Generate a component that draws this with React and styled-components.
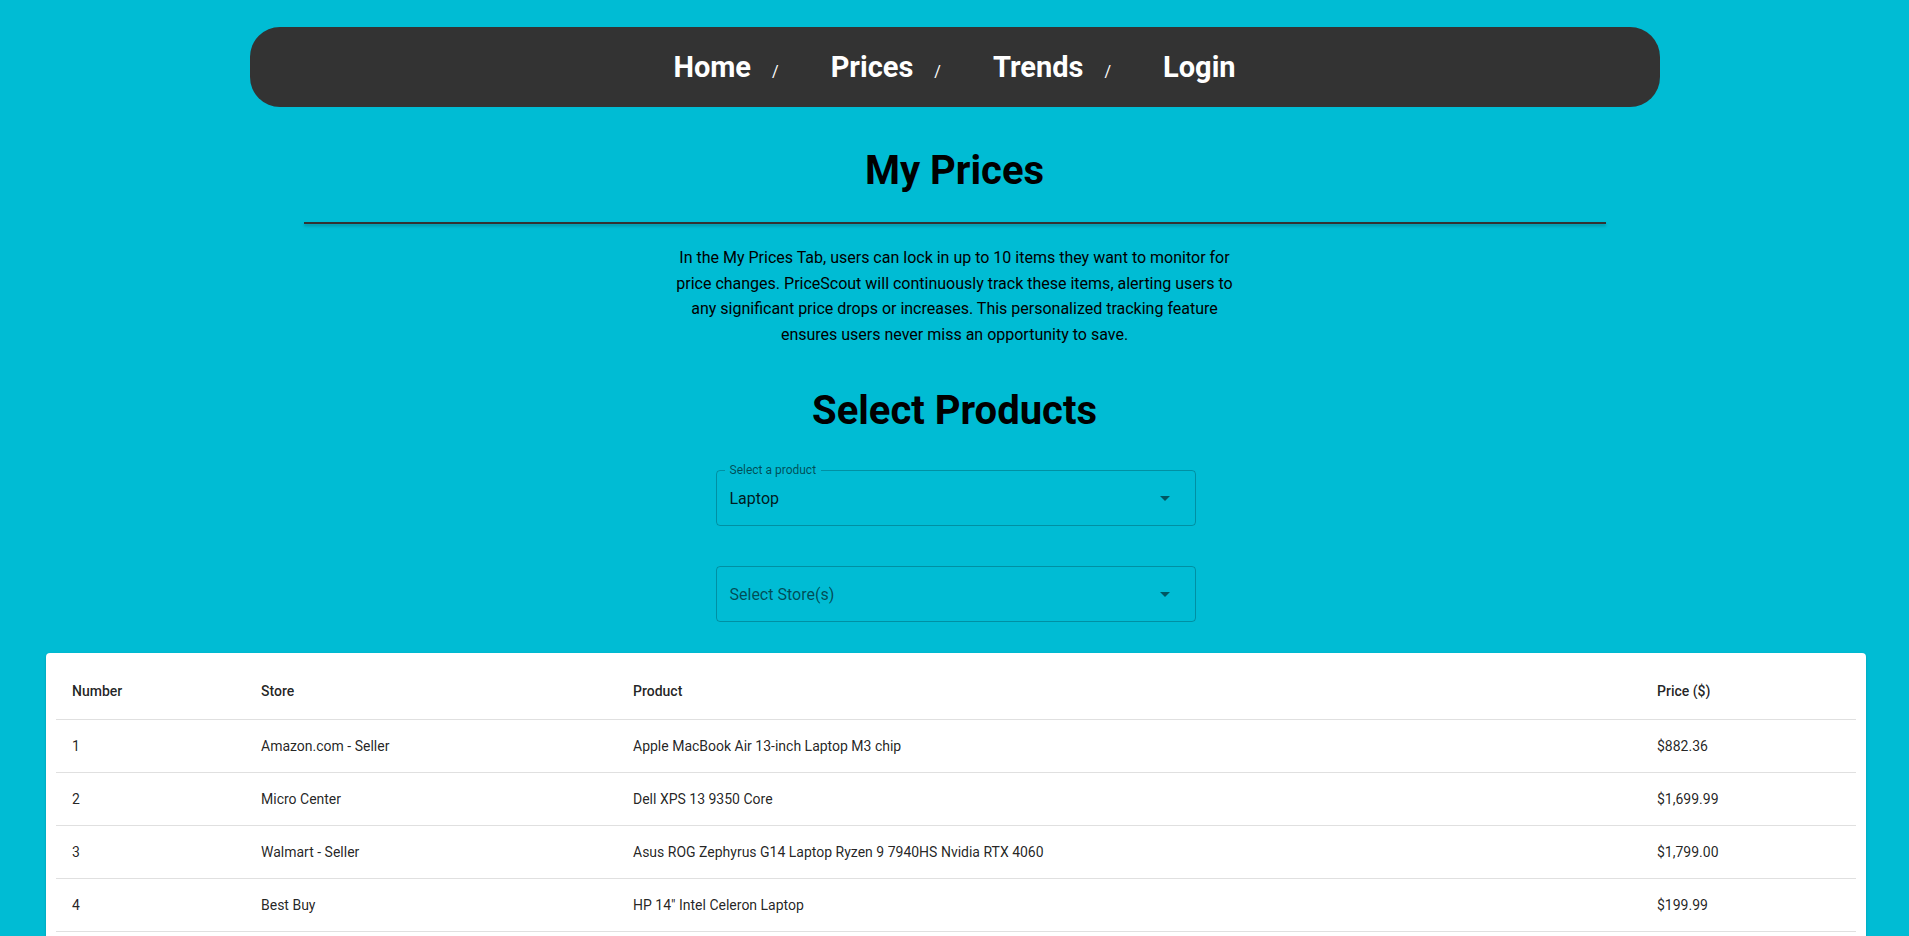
import React from "react";
import styled, { createGlobalStyle } from "styled-components";

const COLORS = {
  cyan: "#00bcd4",
  dark: "#333333",
  white: "#ffffff",
  text: "rgba(0, 0, 0, 0.87)",
  muted: "rgba(0, 0, 0, 0.6)",
  outline: "rgba(0, 0, 0, 0.23)",
  rule: "rgba(224, 224, 224, 1)",
};

const links = ["Home", "Prices", "Trends", "Login"];

const rows = [
  { id: 1, store: "Amazon.com - Seller", product: "Apple MacBook Air 13-inch Laptop M3 chip", price: "$882.36" },
  { id: 2, store: "Micro Center", product: "Dell XPS 13 9350 Core", price: "$1,699.99" },
  { id: 3, store: "Walmart - Seller", product: "Asus ROG Zephyrus G14 Laptop Ryzen 9 7940HS Nvidia RTX 4060", price: "$1,799.00" },
  { id: 4, store: "Best Buy", product: 'HP 14" Intel Celeron Laptop', price: "$199.99" },
];

const ArrowDown = () => (
  <svg width="24" height="24" viewBox="0 0 24 24" fill="currentColor">
    <path d="M7 10l5 5 5-5z" />
  </svg>
);

const App = () => {
  return (
    <>
      <GlobalStyle />
      <Page>
        <NavBar>
          {links.map((link, i) => (
            <React.Fragment key={link}>
              <NavLink href="#">{link}</NavLink>
              {i < links.length - 1 && <Separator>/</Separator>}
            </React.Fragment>
          ))}
        </NavBar>

        <Title>My Prices</Title>
        <Divider />
        <Intro>
          In the My Prices Tab, users can lock in up to 10 items they want to
          monitor for price changes. PriceScout will continuously track these
          items, alerting users to any significant price drops or increases.
          This personalized tracking feature ensures users never miss an
          opportunity to save.
        </Intro>

        <SubTitle>Select Products</SubTitle>

        <Fields>
          <SelectBox>
            <FloatingLabel>Select a product</FloatingLabel>
            <SelectValue>Laptop</SelectValue>
            <SelectIcon>
              <ArrowDown />
            </SelectIcon>
          </SelectBox>
          <SelectBox>
            <SelectValue $placeholder>Select Store(s)</SelectValue>
            <SelectIcon>
              <ArrowDown />
            </SelectIcon>
          </SelectBox>
        </Fields>

        <TablePaper>
          <Table>
            <colgroup>
              <col style={{ width: 189 }} />
              <col style={{ width: 372 }} />
              <col />
              <col style={{ width: 215 }} />
            </colgroup>
            <thead>
              <tr>
                <HeadCell>Number</HeadCell>
                <HeadCell>Store</HeadCell>
                <HeadCell>Product</HeadCell>
                <HeadCell>Price ($)</HeadCell>
              </tr>
            </thead>
            <tbody>
              {rows.map((row) => (
                <tr key={row.id}>
                  <Cell>{row.id}</Cell>
                  <Cell>{row.store}</Cell>
                  <Cell>{row.product}</Cell>
                  <Cell>{row.price}</Cell>
                </tr>
              ))}
            </tbody>
          </Table>
        </TablePaper>
      </Page>
    </>
  );
};

const GlobalStyle = createGlobalStyle`
  * { box-sizing: border-box; }
  html, body {
    margin: 0;
    padding: 0;
    background: ${COLORS.cyan};
    font-family: Roboto, "Helvetica Neue", Arial, sans-serif;
  }
`;

const Page = styled.main`
  display: flex;
  flex-direction: column;
  align-items: center;
  min-height: 100vh;
  padding: 27px 0 40px;
`;

const NavBar = styled.nav`
  width: 1410px;
  height: 80px;
  background: ${COLORS.dark};
  border-radius: 30px;
  display: flex;
  justify-content: center;
  align-items: baseline;
  padding-top: 22px;
`;

const NavLink = styled.a`
  color: ${COLORS.white};
  text-decoration: none;
  font-size: 29px;
  font-weight: 700;
  line-height: 36px;
`;

const Separator = styled.span`
  color: ${COLORS.white};
  font-size: 16px;
  margin: 0 52px 0 21px;
`;

const Title = styled.h1`
  margin: 40px 0 0;
  font-size: 40px;
  line-height: 48px;
  font-weight: 700;
  color: #000;
`;

const Divider = styled.hr`
  width: 1302px;
  height: 2px;
  margin: 27px 0 0;
  border: none;
  background: #333;
  box-shadow: 0 2px 3px rgba(0, 0, 0, 0.25);
`;

const Intro = styled.p`
  margin: 21px 0 0;
  max-width: 570px;
  text-align: center;
  font-size: 16px;
  line-height: 25.6px;
  color: #000;
`;

const SubTitle = styled.h2`
  margin: 40px 0 0;
  font-size: 40px;
  line-height: 48px;
  font-weight: 700;
  color: #000;
`;

const Fields = styled.div`
  display: flex;
  flex-direction: column;
  gap: 40px;
  margin: 35px 0 0 2px;
`;

const SelectBox = styled.div`
  position: relative;
  width: 480px;
  height: 56px;
  border: 1px solid ${COLORS.outline};
  border-radius: 4px;
  display: flex;
  align-items: center;
  padding: 0 32px 0 13px;
`;

const FloatingLabel = styled.span`
  position: absolute;
  left: 8px;
  top: -8px;
  padding: 0 5px;
  background: ${COLORS.cyan};
  font-size: 12px;
  line-height: 14px;
  color: ${COLORS.muted};
`;

const SelectValue = styled.span`
  font-size: 16px;
  line-height: 23px;
  color: ${(p) => (p.$placeholder ? COLORS.muted : COLORS.text)};
`;

const SelectIcon = styled.span`
  position: absolute;
  right: 18px;
  top: 50%;
  transform: translateY(-50%);
  display: flex;
  color: rgba(0, 0, 0, 0.54);
`;

const TablePaper = styled.section`
  align-self: stretch;
  margin: 31px 43px 0 46px;
  padding: 10px;
  background: ${COLORS.white};
  border-radius: 4px;
  box-shadow: 0 2px 1px -1px rgba(0, 0, 0, 0.2), 0 1px 1px 0 rgba(0, 0, 0, 0.14),
    0 1px 3px 0 rgba(0, 0, 0, 0.12);
`;

const Table = styled.table`
  width: 100%;
  border-collapse: collapse;
  table-layout: fixed;
`;

const HeadCell = styled.th`
  text-align: left;
  padding: 16px;
  font-size: 14px;
  font-weight: 500;
  line-height: 24px;
  color: ${COLORS.text};
  border-bottom: 1px solid ${COLORS.rule};
`;

const Cell = styled.td`
  padding: 16px;
  font-size: 14px;
  font-weight: 400;
  line-height: 20px;
  color: ${COLORS.text};
  border-bottom: 1px solid ${COLORS.rule};
`;

export default App;
